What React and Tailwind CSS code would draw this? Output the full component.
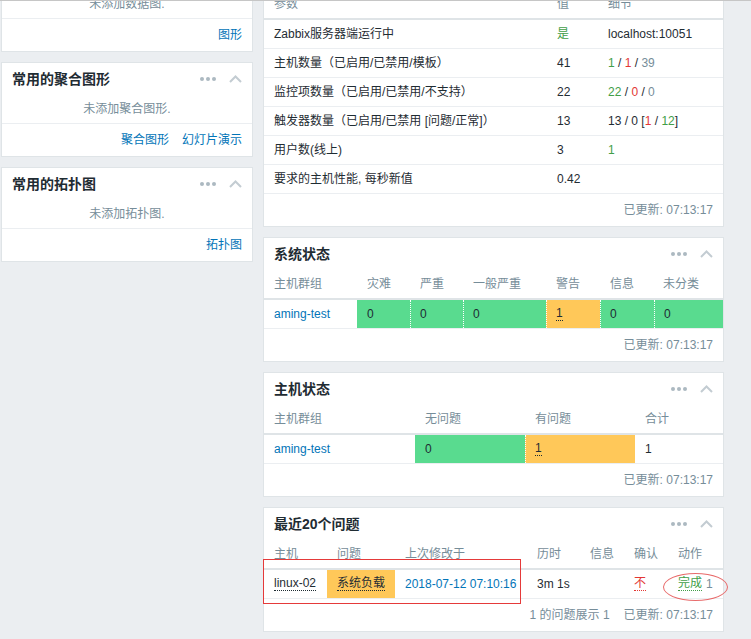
import React from "react";

const grey = "text-[#768d99]";
const link = "text-[#0275b8]";

function HeadIcons() {
  return (
    <div className="flex items-center gap-[13px]">
      <div className="flex gap-[2px]">
        <span className="h-[4px] w-[4px] rounded-full bg-[#acb9c1]" />
        <span className="h-[4px] w-[4px] rounded-full bg-[#acb9c1]" />
        <span className="h-[4px] w-[4px] rounded-full bg-[#acb9c1]" />
      </div>
      <svg width="13" height="8" viewBox="0 0 13 8">
        <path d="M1 7 L6.5 1.5 L12 7" fill="none" stroke="#c3ccd2" strokeWidth="2" />
      </svg>
    </div>
  );
}

function Card({ title, children }) {
  return (
    <div className="border border-[#dfe4e7] bg-white">
      <div className="flex h-[31px] items-center justify-between px-[10px]">
        <h4 className="text-[14px] font-bold leading-[16px] text-[#1f2c33]">{title}</h4>
        <HeadIcons />
      </div>
      {children}
    </div>
  );
}

function Footer({ children }) {
  return (
    <div className={`flex h-[32px] items-center justify-end gap-[14px] pr-[10px] ${grey}`}>{children}</div>
  );
}

function EmptyCard({ title, empty, links }) {
  return (
    <Card title={title}>
      <div className={`flex h-[29px] items-center justify-center ${grey}`}>{empty}</div>
      <div className={`flex h-[33px] items-center justify-end gap-[13px] border-t border-[#ebeef1] pr-[10px] ${link}`}>
        {links.map((l) => (
          <span key={l}>{l}</span>
        ))}
      </div>
    </Card>
  );
}

function Dotted({ children, className = "" }) {
  return <span className={`inline-block border-b border-dotted border-current leading-[13px] ${className}`}>{children}</span>;
}

function HeadRow({ cols }) {
  return (
    <div className={`flex h-[31px] items-center border-b-2 border-[#dfe4e7] ${grey}`}>
      {cols.map(([label, w], i) => (
        <div key={i} className={`${w} ${i === 0 ? "pl-[10px]" : "pl-[10px]"}`}>
          {label}
        </div>
      ))}
    </div>
  );
}

const infoRows = [
  ["Zabbix服务器端运行中", <span className="text-[#429e47]">是</span>, "localhost:10051"],
  [
    "主机数量（已启用/已禁用/模板）",
    "41",
    <>
      <span className="text-[#429e47]">1</span> / <span className="text-[#e33734]">1</span> /{" "}
      <span className={grey}>39</span>
    </>,
  ],
  [
    "监控项数量（已启用/已禁用/不支持）",
    "22",
    <>
      <span className="text-[#429e47]">22</span> / <span className="text-[#e33734]">0</span> /{" "}
      <span className={grey}>0</span>
    </>,
  ],
  [
    "触发器数量（已启用/已禁用 [问题/正常]）",
    "13",
    <>
      13 / 0 [<span className="text-[#e33734]">1</span> / <span className="text-[#429e47]">12</span>]
    </>,
  ],
  ["用户数(线上)", "3", <span className="text-[#429e47]">1</span>],
  ["要求的主机性能, 每秒新值", "0.42", ""],
];

const sevCells = [
  ["w-[53px]", "0", false],
  ["w-[53px]", "0", false],
  ["w-[83px]", "0", false],
  ["w-[54px]", "1", true],
  ["w-[54px]", "0", false],
  ["flex-1", "0", false],
];

export default function App() {
  return (
    <div className="relative h-[639px] w-full overflow-hidden bg-[#ebeef1] font-['Liberation_Sans','Noto_Sans_CJK_SC',sans-serif] text-[12px] leading-[14px] text-[#1f2c33]">
      <div className="absolute left-0 top-0 z-10 h-px w-full bg-[#c6c6c6]" />

      <div className="mt-[-43px] flex items-start gap-[10px] pl-[1px]">
        {/* left column */}
        <div className="flex w-[252px] flex-col gap-[10px]">
          <EmptyCard title="常用的图形" empty="未添加数据图." links={["图形"]} />
          <EmptyCard title="常用的聚合图形" empty="未添加聚合图形." links={["聚合图形", "幻灯片演示"]} />
          <EmptyCard title="常用的拓扑图" empty="未添加拓扑图." links={["拓扑图"]} />
        </div>

        {/* right column */}
        <div className="flex w-[461px] flex-col gap-[10px]">
          <Card title="系统信息">
            <HeadRow cols={[["参数", "w-[288px]"], ["值", "w-[51px] !pl-[5px]"], ["细节", "flex-1 !pl-[5px]"]]} />
            {infoRows.map(([p, v, d], i) => (
              <div key={i} className="flex h-[29px] items-center border-b border-[#ebeef1]">
                <div className="w-[288px] pl-[10px]">{p}</div>
                <div className="w-[51px] pl-[5px]">{v}</div>
                <div className="flex-1 pl-[5px]">{d}</div>
              </div>
            ))}
            <Footer>已更新: 07:13:17</Footer>
          </Card>

          <Card title="系统状态">
            <HeadRow
              cols={[
                ["主机群组", "w-[93px]"],
                ["灾难", "w-[53px]"],
                ["严重", "w-[53px]"],
                ["一般严重", "w-[83px]"],
                ["警告", "w-[54px]"],
                ["信息", "w-[54px]"],
                ["未分类", "flex-1 !pl-[9px]"],
              ]}
            />
            <div className="flex h-[29px] border-b border-[#ebeef1]">
              <div className={`flex w-[93px] items-center pl-[10px] ${link}`}>aming-test</div>
              {sevCells.map(([w, val, warn], i) => (
                <div
                  key={i}
                  className={`flex ${w} items-center ${i === 0 ? "pl-[10px]" : "border-l border-dotted border-white pl-[9px]"} ${
                    warn ? "bg-[#ffc859]" : "bg-[#59db8f]"
                  }`}
                >
                  {warn ? <Dotted>{val}</Dotted> : val}
                </div>
              ))}
            </div>
            <Footer>已更新: 07:13:17</Footer>
          </Card>

          <Card title="主机状态">
            <HeadRow
              cols={[
                ["主机群组", "w-[151px]"],
                ["无问题", "w-[110px]"],
                ["有问题", "w-[110px]"],
                ["合计", "flex-1"],
              ]}
            />
            <div className="flex h-[29px] border-b border-[#ebeef1]">
              <div className={`flex w-[151px] items-center pl-[10px] ${link}`}>aming-test</div>
              <div className="flex w-[110px] items-center bg-[#59db8f] pl-[10px]">0</div>
              <div className="flex w-[110px] items-center border-l border-dotted border-white bg-[#ffc859] pl-[9px]">
                <Dotted>1</Dotted>
              </div>
              <div className="flex flex-1 items-center pl-[10px]">1</div>
            </div>
            <Footer>已更新: 07:13:17</Footer>
          </Card>

          <Card title="最近20个问题">
            <HeadRow
              cols={[
                ["主机", "w-[63px]"],
                ["问题", "w-[68px]"],
                ["上次修改于", "w-[132px]"],
                ["历时", "w-[53px]"],
                ["信息", "w-[44px]"],
                ["确认", "w-[44px]"],
                ["动作", "flex-1"],
              ]}
            />
            <div className="flex h-[29px] border-b border-[#ebeef1]">
              <div className="flex w-[63px] items-center pl-[10px]">
                <Dotted>linux-02</Dotted>
              </div>
              <div className="flex w-[68px] items-center bg-[#ffc859] pl-[10px]">
                <Dotted>系统负载</Dotted>
              </div>
              <div className={`flex w-[132px] items-center pl-[10px] ${link}`}>2018-07-12 07:10:16</div>
              <div className="flex w-[53px] items-center pl-[10px]">3m 1s</div>
              <div className="w-[44px]" />
              <div className="flex w-[44px] items-center pl-[10px]">
                <Dotted className="text-[#e33734]">不</Dotted>
              </div>
              <div className="flex flex-1 items-center pl-[10px]">
                <Dotted className="text-[#429e47]">完成</Dotted>
                <span className={`ml-[4px] ${grey}`}>1</span>
              </div>
            </div>
            <Footer>
              <span>1 的问题展示 1</span>
              <span>已更新: 07:13:17</span>
            </Footer>
          </Card>
        </div>
      </div>

      {/* red annotations */}
      <div className="absolute left-[263px] top-[559px] h-[45px] w-[258px] border border-[#e53a3a]" />
      <div className="absolute left-[663px] top-[573px] h-[28px] w-[65px] rounded-[50%] border border-[#e86a6a]" />
    </div>
  );
}
